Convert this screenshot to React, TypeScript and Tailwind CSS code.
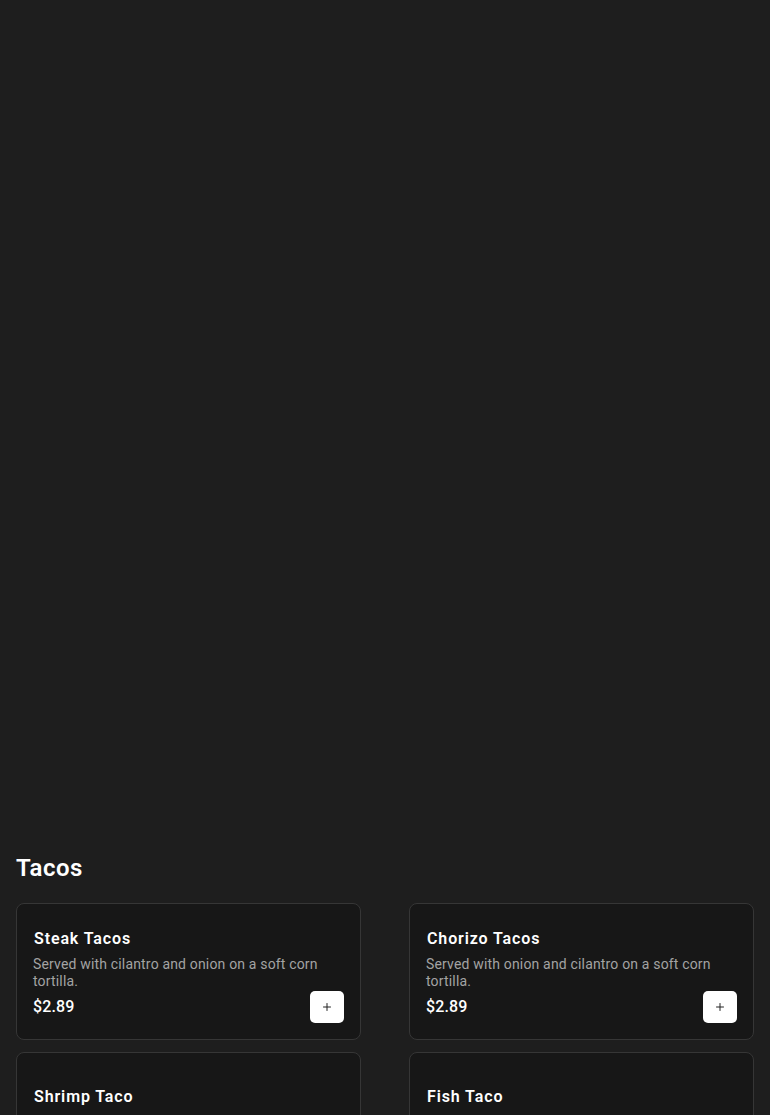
import React from "react";
import { Plus } from "lucide-react";

type Item = { name: string; desc: string; price: string };

const items: Item[] = [
  { name: "Steak Tacos", desc: "Served with cilantro and onion on a soft corn tortilla.", price: "$2.89" },
  { name: "Chorizo Tacos", desc: "Served with onion and cilantro on a soft corn tortilla.", price: "$2.89" },
  { name: "Shrimp Taco", desc: "Served with cabbage and pico de gallo.", price: "$3.49" },
  { name: "Fish Taco", desc: "Served with cabbage and chipotle sauce.", price: "$3.49" },
];

function Card({ item }: { item: Item }) {
  return (
    <div className="h-[137px] rounded-lg border border-[#363636] bg-[#171717] px-4 pt-[7px] flex flex-col justify-center">
      <div className="pl-px text-[16px] leading-[24px] font-semibold tracking-[0.055em] text-white">{item.name}</div>
      <p className="mt-[5px] text-[14px] leading-[17px] tracking-[0.012em] text-[#a3a3a3]">{item.desc}</p>
      <div className="mt-[1px] flex items-center justify-between">
        <span className="text-[16px] leading-[20px] font-medium tracking-[0.01em] text-white">{item.price}</span>
        <button className="w-[34px] h-[32px] rounded-[5px] bg-white flex items-center justify-center text-[#222]">
          <Plus size={12} strokeWidth={2} />
        </button>
      </div>
    </div>
  );
}

export default function App() {
  return (
    <div
      className="min-h-screen bg-[#1e1e1e] text-white"
      style={{ fontFamily: "Roboto, 'Noto Sans', sans-serif" }}
    >
      <div className="h-[852px]" />
      <section className="px-4">
        <h2 className="text-[24px] leading-[32px] font-semibold tracking-[0.02em] text-white">Tacos</h2>
        <div className="mt-[19px] grid grid-cols-2 gap-x-12 gap-y-3">
          {items.map((it) => (
            <Card key={it.name} item={it} />
          ))}
        </div>
      </section>
    </div>
  );
}
